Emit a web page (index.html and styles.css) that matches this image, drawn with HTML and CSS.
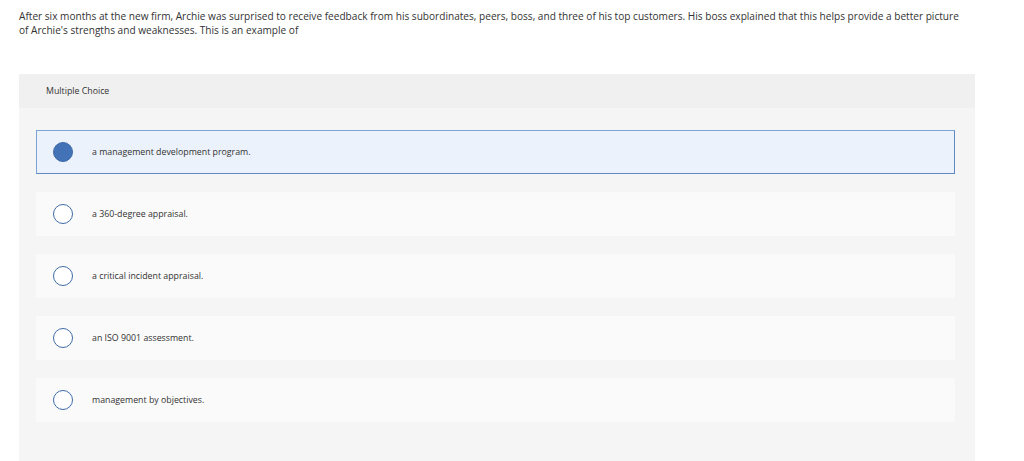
FILE: index.html
```html
<!DOCTYPE html>
<html>
<head>
<meta charset="utf-8">
<link rel="stylesheet" href="styles.css">
</head>
<body>
<div class="page">
  <p class="question">After six months at the new firm, Archie was surprised to receive feedback from his subordinates, peers, boss, and three of his top customers. His boss explained that this helps provide a better picture of Archie's strengths and weaknesses. This is an example of</p>
  <div class="panel">
    <div class="panel-head">Multiple Choice</div>
    <div class="panel-body">
      <div class="option selected"><span class="radio"></span><span class="label">a management development program.</span></div>
      <div class="option"><span class="radio"></span><span class="label">a 360-degree appraisal.</span></div>
      <div class="option"><span class="radio"></span><span class="label">a critical incident appraisal.</span></div>
      <div class="option"><span class="radio"></span><span class="label">an ISO 9001 assessment.</span></div>
      <div class="option"><span class="radio"></span><span class="label">management by objectives.</span></div>
    </div>
  </div>
</div>
</body>
</html>
```
FILE: styles.css
```css
html, body {
  margin: 0;
  padding: 0;
  background: #ffffff;
}
body {
  font-family: "Open Sans", "Liberation Sans", sans-serif;
  color: #333333;
}
.page {
  padding: 10px 0 0 19px;
  width: 956px;
}
.question {
  margin: 0;
  font-size: 10.1px;
  line-height: 13.5px;
  color: #333333;
  width: 944px;
}
.panel {
  margin-top: 37px;
  width: 956px;
  background: #f5f5f5;
}
.panel-head {
  height: 34px;
  background: #f0f0f0;
  display: flex;
  align-items: center;
  padding-left: 27px;
  font-size: 8.8px;
  color: #333333;
}
.panel-body {
  padding: 22px 20px 40px 17px;
  display: flex;
  flex-direction: column;
  gap: 18px;
}
.option {
  height: 44px;
  box-sizing: border-box;
  background: #fafafa;
  display: flex;
  align-items: center;
  padding-left: 16px;
  border: 1px solid transparent;
}
.option.selected {
  background: #ebf2fb;
  border: 1px solid #7aa3d6;
  border-right-color: #5f8ac2;
  border-bottom-color: #5f8ac2;
}
.radio {
  width: 20px;
  height: 20px;
  box-sizing: border-box;
  border-radius: 50%;
  border: 1px solid #3f6ba8;
  background: #ffffff;
  flex: none;
}
.selected .radio {
  background: #4472b6;
  border-color: #3e6aa9;
}
.label {
  margin-left: 19px;
  font-size: 8.8px;
  color: #333333;
}
```
